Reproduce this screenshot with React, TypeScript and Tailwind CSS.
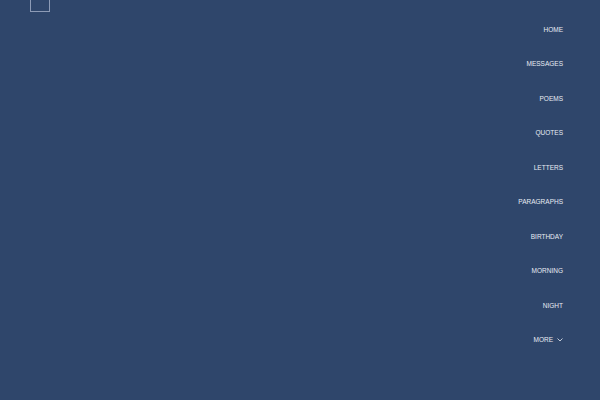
const items = ['HOME', 'MESSAGES', 'POEMS', 'QUOTES', 'LETTERS', 'PARAGRAPHS', 'BIRTHDAY', 'MORNING', 'NIGHT']

export default function App() {
  return (
    <div className="relative w-[600px] h-[400px] overflow-hidden bg-[#2f466b] font-['Liberation_Sans',Arial,sans-serif]">
      {/* logo box peeking from top */}
      <div className="absolute left-[30px] top-[-10px] w-[20px] h-[22px] border border-[#8d9bb6]" />

      <nav className="flex flex-col items-end pr-[37px] pt-[12.5px]">
        {items.map((item) => (
          <a key={item} className="h-[34.5px] flex items-center text-[6.5px] leading-none text-[#e8ecf3]">
            {item}
          </a>
        ))}
        <a className="h-[34.5px] flex items-center gap-[4px] text-[6.5px] leading-none text-[#e8ecf3]">
          MORE
          <svg width="6" height="4" viewBox="0 0 6 4" fill="none" stroke="#e8ecf3" strokeWidth="0.8">
            <path d="M0.5 0.5 L3 3 L5.5 0.5" />
          </svg>
        </a>
      </nav>
    </div>
  )
}
